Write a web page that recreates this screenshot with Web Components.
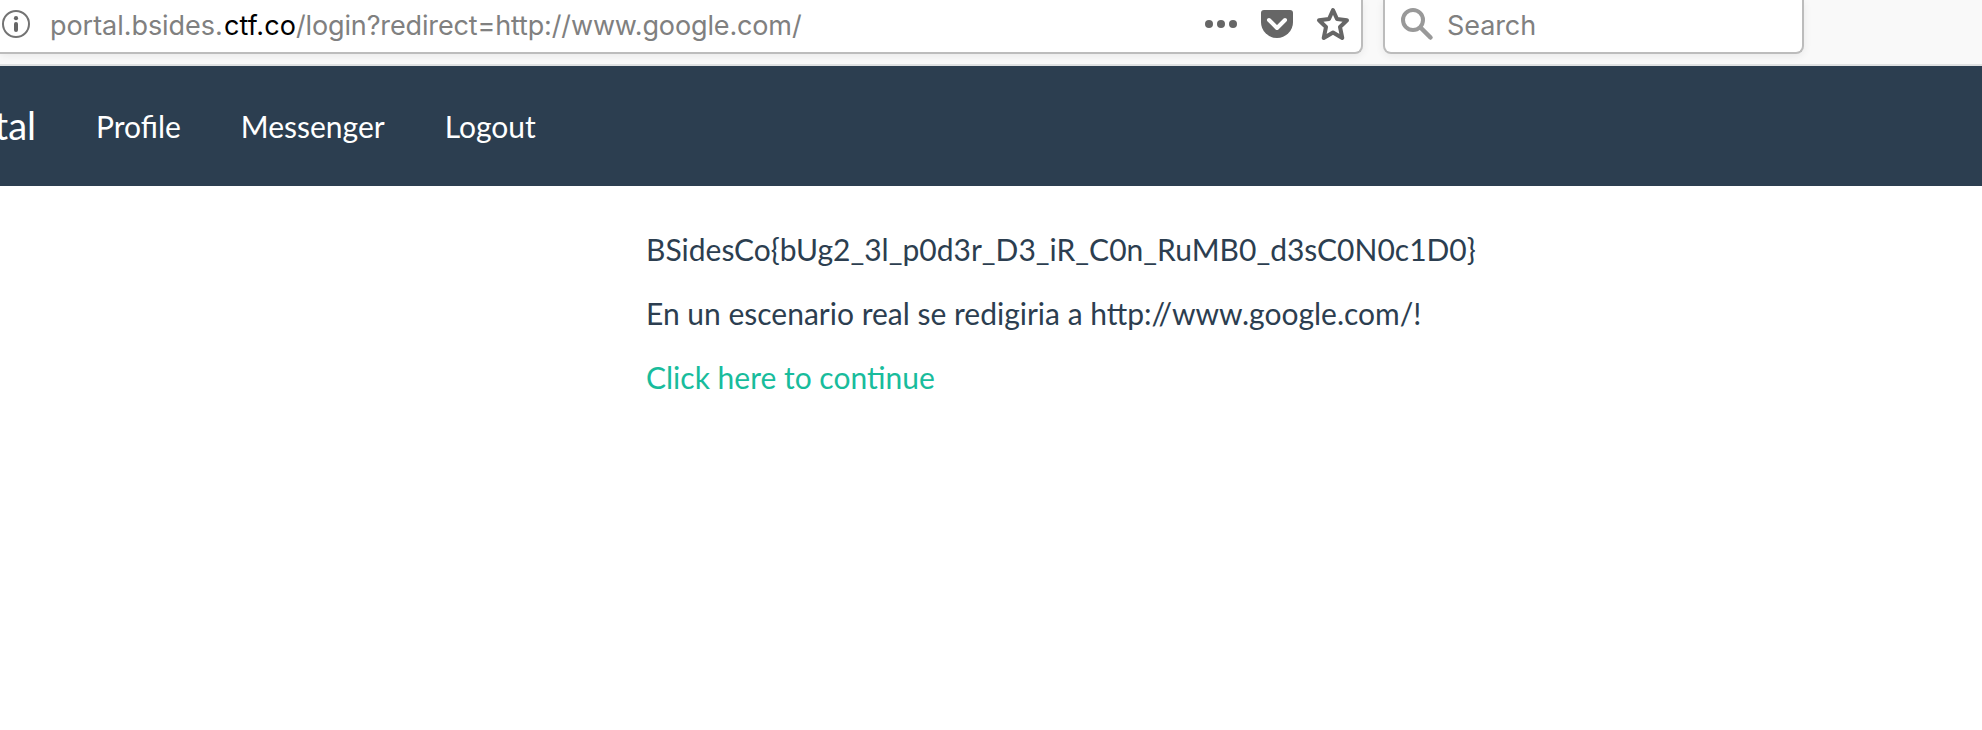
<!DOCTYPE html>
<html lang="es">
<head>
<meta charset="utf-8">
<title>Portal</title>
<style>
html,body{margin:0;height:100%;background:#fff;overflow:hidden}
</style>
</head>
<body>
<portal-window></portal-window>
<script>
const define = (name, html) => customElements.define(name, class extends HTMLElement {
  constructor() {
    super();
    this.attachShadow({mode: 'open'}).innerHTML = html;
  }
});

define('address-bar', `
<style>
:host{box-sizing:border-box;display:flex;align-items:center;width:1363px;height:54px;padding:0 11px 4px 1px;background:#fff;border:2px solid #bcbcbc;border-left:0;border-top:0;border-radius:0 0 8px 0;box-shadow:0 2px 8px rgba(0,0,0,.07);font:27px/30px Inter,sans-serif;color:#808080}
svg{display:block;flex:none}
.url{margin-left:19px;padding-top:4px;flex:1;white-space:nowrap;display:flex}
.a{width:174px;letter-spacing:-.05px}
.b{width:72px;color:#000;letter-spacing:.1px}
.c{letter-spacing:-.14px}
.actions{display:flex;gap:22px;align-items:center}
</style>
<svg width="30" height="30" viewBox="0 0 30 30"><circle cx="15" cy="15" r="13" fill="none" stroke="#737373" stroke-width="2"/><circle cx="15" cy="9.2" r="2.1" fill="#666"/><rect x="13" y="13" width="4" height="10" rx="2" fill="#666"/></svg>
<div class="url"><span class="a">portal.bsides.</span><span class="b">ctf.co</span><span class="c">/login?redirect=http://www.google.com/</span></div>
<div class="actions">
<svg width="34" height="32" viewBox="0 0 34 32" fill="#666"><circle cx="5" cy="16" r="4"/><circle cx="17" cy="16" r="4"/><circle cx="29" cy="16" r="4"/></svg>
<svg width="34" height="32" viewBox="0 0 34 32"><path d="M4 2H30Q33 2 33 5V14A16 16 0 0 1 1 14V5Q1 2 4 2Z" fill="#666"/><path d="M9 12L17 20L25 12" fill="none" stroke="#fff" stroke-width="4" stroke-linecap="round" stroke-linejoin="round"/></svg>
<svg width="34" height="34" viewBox="0 0 34 34"><path d="M17 3L21 12L31 13.2L24 20L26.3 31L17 25.5L7.7 31L10 20L3 13.2L13 12Z" fill="none" stroke="#666" stroke-width="4" stroke-linejoin="round"/></svg>
</div>`);

define('search-box', `
<style>
:host{box-sizing:border-box;display:flex;align-items:center;width:421px;height:54px;padding:0 16px 4px 15px;background:#fff;border:2px solid #bcbcbc;border-top:0;border-radius:0 0 8px 8px;box-shadow:0 2px 8px rgba(0,0,0,.07);font:27px/30px Inter,sans-serif;color:#808080}
svg{display:block;margin-right:13px}
span{padding-top:4px;letter-spacing:-.1px}
</style>
<svg width="34" height="34" viewBox="0 0 34 34" fill="none" stroke="#999"><circle cx="13" cy="13" r="10" stroke-width="4"/><path d="M20.5 20.5L30.5 30.5" stroke-width="4.5" stroke-linecap="round"/></svg>
<span>Search</span>`);

define('browser-toolbar', `
<style>
:host{box-sizing:border-box;display:flex;gap:20px;align-items:flex-end;height:66px;padding-bottom:10px;background:#f9f9f9;border-bottom:2px solid #dfe1e2;overflow:hidden}
</style>
<address-bar></address-bar><search-box></search-box>`);

define('nav-link', `
<style>
:host{display:block;padding:0 30px;font:30px/40px Lato,sans-serif;color:#fff}
</style>
<slot></slot>`);

define('portal-nav', `
<style>
:host{box-sizing:border-box;display:flex;align-items:center;height:120px;background:#2c3e50;overflow:hidden}
.brand{display:flex;justify-content:flex-end;width:36px;padding:0 30px 3px 0;font:38px/40px Lato,sans-serif;color:#fff}
</style>
<div class="brand">tal</div>
<nav-link>Profile</nav-link><nav-link>Messenger</nav-link><nav-link>Logout</nav-link>`);

define('portal-message', `
<style>
:host{display:block;padding:42px 0 0 646px;font:30px/43px Lato,sans-serif;color:#2c3e50}
p{margin:0 0 21px}
a{color:#18bc9c}
</style>
<p>BSidesCo{bUg2_3l_p0d3r_D3_iR_C0n_RuMB0_d3sC0N0c1D0}</p>
<p>En un escenario real se redigiria a http://www.google.com/!</p>
<p><a>Click here to continue</a></p>`);

define('portal-window', `
<style>:host{display:block}</style>
<browser-toolbar></browser-toolbar><portal-nav></portal-nav><portal-message></portal-message>`);
</script>
</body>
</html>
